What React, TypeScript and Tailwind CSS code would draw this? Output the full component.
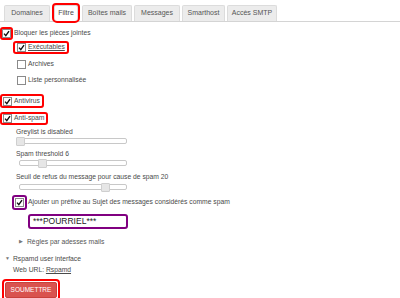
import React from 'react';

const tabs = [
  { label: 'Domaines', w: 'w-[46px]' },
  { label: 'Filtre', w: 'w-[24px]', active: true },
  { label: 'Boîtes mails', w: 'w-[50px]' },
  { label: 'Messages', w: 'w-[46px]' },
  { label: 'Smarthost', w: 'w-[43px]' },
  { label: 'Accès SMTP', w: 'w-[50px]' },
];

function Check({ checked }: { checked?: boolean }) {
  return (
    <span className="w-[9px] h-[9px] border border-[#8a8a8a] bg-white flex items-center justify-center shrink-0">
      {checked && (
        <svg viewBox="0 0 10 10" className="w-[7px] h-[7px]">
          <path d="M1.5 5.2 L4 8 L8.6 1.6" stroke="#111" strokeWidth="2" fill="none" />
        </svg>
      )}
    </span>
  );
}

function Slider({ left, thumb, className }: { left: string; thumb: string; className: string }) {
  return (
    <div className={`relative h-[10px] ${className}`}>
      <div className={`absolute top-[1px] h-[6px] right-[273px] ${left} border border-[#c8c8c8] rounded-[2px] bg-white`} />
      <div className={`absolute top-0 w-[9px] h-[9px] ${thumb} border border-[#cfcfcf] rounded-[1px] bg-[#e6e6e6]`} />
    </div>
  );
}

export default function App() {
  return (
    <div className="w-[400px] h-[298px] bg-white text-[#4a4a4a] text-[6.75px] overflow-hidden" style={{ fontFamily: '"Liberation Sans", Arial, sans-serif' }}>
      <div className="h-[22px] pt-[5px] pl-[4px] border-b border-[#d4d4d4] flex text-[7px]">
        {tabs.map((t, i) => (
          <div
            key={t.label}
            className={`${t.w} h-[16px] flex items-center justify-center border border-b-0 rounded-t-[2px] ${
              t.active
                ? 'bg-white border-[#ddd] outline-2 outline-[#f00] rounded-[3px] ml-[4px] mr-[2px] z-10'
                : 'bg-[#ececec] border-[#dcdcdc] text-[#555]'
            } ${i > 0 && !t.active ? 'ml-[2px]' : ''}`}
          >
            {t.label}
          </div>
        ))}
      </div>

      <div className="flex flex-col">
        <div className="h-[14px] mt-[4px] flex items-center">
          <span className="border-2 border-[#f00] rounded-[3px] flex">
            <Check checked />
          </span>
          <span className="ml-[1px]">Bloquer les pièces jointes</span>
        </div>

        <div className="h-[13px] ml-[13px] mt-[1px] flex">
          <span className="border-2 border-[#f00] rounded-[3px] flex items-center pl-[2px] pr-[2px]">
            <Check checked />
            <span className="ml-[2px] underline">Exécutables</span>
          </span>
        </div>

        <div className="h-[14px] ml-[17px] mt-[3px] flex items-center">
          <Check />
          <span className="ml-[2px]">Archives</span>
        </div>
        <div className="h-[14px] ml-[17px] mt-[2px] flex items-center">
          <Check />
          <span className="ml-[2px]">Liste personnalisée</span>
        </div>

        <div className="h-[14px] mt-[7px] flex">
          <span className="border-2 border-[#f00] rounded-[3px] flex items-center pl-[1px] pr-[2px]">
            <Check checked />
            <span className="ml-[2px]">Antivirus</span>
          </span>
        </div>
        <div className="h-[13px] mt-[4px] flex">
          <span className="border-2 border-[#f00] rounded-[3px] flex items-center pl-[1px] pr-[2px]">
            <Check checked />
            <span className="ml-[2px]">Anti-spam</span>
          </span>
        </div>

        <div className="h-[10px] mt-[2px] ml-[16px] flex items-center">Greylist is disabled</div>
        <Slider className="" left="left-[16px]" thumb="left-[16px]" />
        <div className="h-[10px] mt-[2px] ml-[16px] flex items-center">Spam threshold 6</div>
        <Slider className="" left="left-[19px]" thumb="left-[38px]" />
        <div className="h-[10px] mt-[3px] ml-[16px] flex items-center">Seuil de refus du message pour cause de spam 20</div>
        <Slider className="mt-[1px]" left="left-[19px]" thumb="left-[101px]" />

        <div className="h-[14px] mt-[2px] flex items-center">
          <span className="ml-[12px] border-2 border-[#800080] rounded-[3px] flex p-[1px]">
            <Check checked />
          </span>
          <span className="ml-[1px]">Ajouter un préfixe au Sujet des messages considérés comme spam</span>
        </div>

        <div className="ml-[28px] mt-[5px] w-[100px] h-[15px] border-2 border-[#800080] rounded-[3px] flex items-center pl-[3px] text-[8.5px] text-[#222]">
          ***POURRIEL***
        </div>

        <div className="h-[12px] mt-[7px] ml-[19px] flex items-center text-[#555]">
          <span className="text-[5px] w-[8px] text-[#777]">▶</span>
          <span>Règles par adesses mails</span>
        </div>

        <div className="h-[12px] mt-[5px] ml-[5px] flex items-center">
          <span className="text-[5px] w-[8px] text-[#777]">▼</span>
          <span>Rspamd user interface</span>
        </div>
        <div className="h-[11px] ml-[13px] flex items-center">
          Web URL:&nbsp;<span className="underline">Rspamd</span>
        </div>

        <div className="mt-[3px] ml-[2px] w-[58px] h-[22px] border-2 border-[#f00] rounded-[4px] flex items-center justify-center">
          <div className="w-[52px] h-[16px] bg-[#d9534f] border border-[#c9403b] rounded-[2px] text-white flex items-center justify-center text-[6.5px]">
            SOUMETTRE
          </div>
        </div>
      </div>
    </div>
  );
}
